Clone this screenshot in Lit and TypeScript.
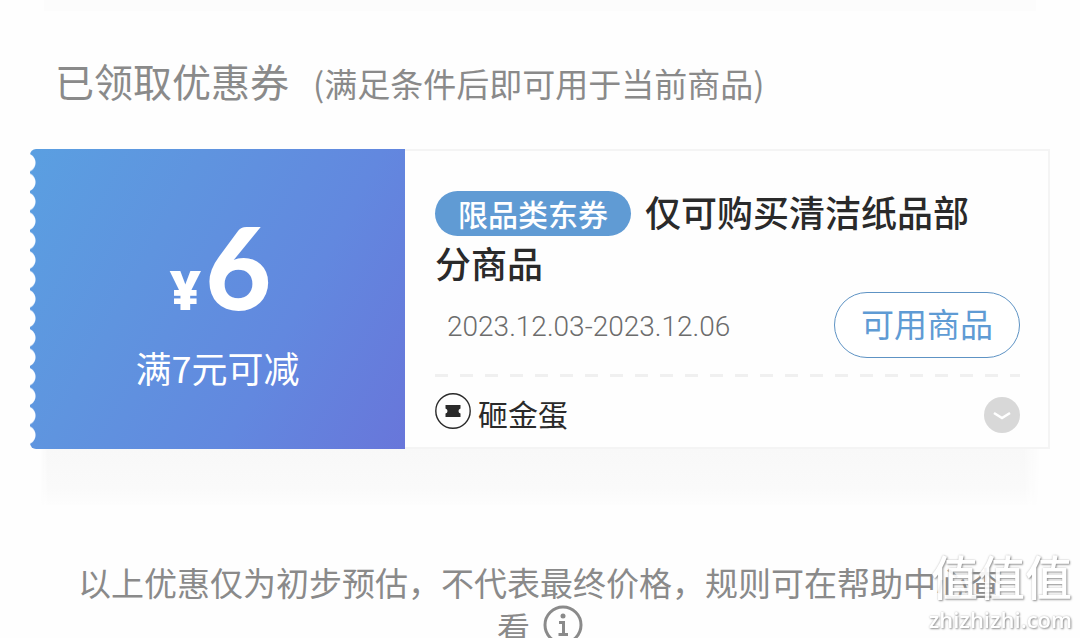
import { LitElement, html, css } from "lit";
import { customElement, property } from "lit/decorators.js";

@customElement("coupon-card")
class CouponCard extends LitElement {
  @property() amount = "";
  @property() condition = "";
  @property() tag = "";
  @property() name = "";
  @property() period = "";
  @property() source = "";

  static styles = css`
    :host {
      display: block;
      margin: 0 30px;
    }
    .card {
      display: flex;
      min-height: 300px;
    }
    .value {
      flex: 0 0 375px;
      display: flex;
      color: #fff;
      background: linear-gradient(118deg, #5a9fe1 0%, #5f94df 33%, #6288df 66%, #6876da 100%);
      border-radius: 6px 0 0 6px;
    }
    .tear {
      width: 6px;
      margin: 4px 0;
      background: radial-gradient(circle at -4px 50%, #fff 9px, transparent 10px) 0 0 / 6px 20px;
      background-repeat: no-repeat round;
    }
    .sum {
      flex: 1;
      display: flex;
      flex-direction: column;
      align-items: center;
      padding: 67px 6px 0 0;
    }
    .amount {
      padding-left: 6px;
      font-family: Lato, sans-serif;
      font-weight: 900;
      line-height: 100px;
      display: flex;
      align-items: baseline;
      gap: 4px;
    }
    .yen {
      font-family: "Open Sans", sans-serif;
      font-weight: 800;
      font-size: 54px;
    }
    .number {
      font-size: 114px;
    }
    .condition {
      font-size: 36px;
      line-height: 44px;
      margin-top: 6px;
    }
    .detail {
      flex: 1;
      min-width: 0;
      box-sizing: border-box;
      border: solid #f4f4f4;
      border-width: 2px 2px 2px 0;
      padding: 35px 28px 0 30px;
    }
    .name {
      margin: 0;
      padding-right: 24px;
      font-size: 36px;
      font-weight: 500;
      line-height: 51px;
      color: #2a2a2a;
    }
    .tag {
      display: inline-block;
      vertical-align: top;
      margin: 5px 14px 0 0;
      padding: 0 23px;
      border-radius: 23px;
      background: #609bd4;
      color: #fff;
      font-size: 30px;
      line-height: 45px;
    }
    .row {
      display: flex;
      justify-content: space-between;
      align-items: center;
    }
    .when {
      margin-top: 4px;
    }
    .period {
      padding: 2px 0 0 12px;
      font-family: Roboto, sans-serif;
      font-weight: 300;
      font-size: 28px;
      color: #6c6c6c;
    }
    .goods {
      box-sizing: border-box;
      width: 186px;
      height: 66px;
      padding: 0 0 4px;
      border: 1px solid #5e93c4;
      border-radius: 33px;
      background: #fff;
      color: #5f9bd4;
      font: inherit;
      font-size: 33px;
    }
    .rule {
      height: 3px;
      margin: 16px 0;
      background: repeating-linear-gradient(90deg, #f0f0f0 0 13px, transparent 13px 25px);
    }
    .source {
      display: flex;
      align-items: flex-start;
      gap: 7px;
      font-size: 30px;
      line-height: 40px;
      color: #2a2a2a;
    }
    .more {
      align-self: flex-end;
      width: 36px;
      height: 36px;
      padding: 0;
      border: 0;
      border-radius: 50%;
      background: #d8d8d8;
    }
    svg {
      display: block;
    }
    .shade {
      height: 56px;
      margin: 0 10px;
      background: linear-gradient(#f8f8f8, #fafafa 70%, #fdfdfd);
      mask-image: linear-gradient(90deg, transparent, #000 8px calc(100% - 16px), transparent);
    }
  `;

  render() {
    return html`
      <article class="card">
        <div class="value">
          <div class="tear"></div>
          <div class="sum">
            <div class="amount"><span class="yen">¥</span><span class="number">${this.amount}</span></div>
            <div class="condition">${this.condition}</div>
          </div>
        </div>
        <div class="detail">
          <h2 class="name"><span class="tag">${this.tag}</span>${this.name}</h2>
          <div class="row when">
            <span class="period">${this.period}</span>
            <button class="goods" type="button">可用商品</button>
          </div>
          <div class="rule"></div>
          <div class="row">
            <span class="source">
              <svg width="36" height="36" viewBox="0 0 36 36" aria-hidden="true">
                <circle cx="18" cy="18" r="17.2" fill="none" stroke="#2a2a2a" stroke-width="1.4" />
                <path d="M10.500 12H25.500V15.500Q23.500 16 23.500 18T25.500 20.500V24H10.500V20.500Q12.500 20 12.500 18T10.500 15.500Z" fill="#2a2a2a" />
              </svg>
              ${this.source}
            </span>
            <button class="more" type="button" aria-label="展开">
              <svg width="36" height="36" viewBox="0 0 36 36">
                <path d="M10 16L18 21L26 16" fill="none" stroke="#fff" stroke-width="2.6" />
              </svg>
            </button>
          </div>
        </div>
      </article>
      <div class="shade"></div>
    `;
  }
}

@customElement("app-root")
class AppRoot extends LitElement {
  static styles = css`
    :host {
      display: block;
      height: 100vh;
      overflow-y: auto;
      scrollbar-width: none;
      background: #fefefe;
      font-family: "Noto Sans CJK SC", sans-serif;
      color: #8a8a8a;
    }
    .previous {
      height: 11px;
      margin: 0 44px;
      background: #fcfcfc;
    }
    .heading {
      display: flex;
      align-items: baseline;
      gap: 24px;
      padding: 39px 55px 36px;
      line-height: 60px;
    }
    .title {
      margin: 0;
      font-size: 39px;
      font-weight: 400;
    }
    .hint {
      font-size: 33px;
    }
    .note {
      margin: 0;
      padding: 55px 72px 20px;
      font-size: 33px;
      line-height: 45px;
      text-align: center;
    }
    .info {
      display: inline-block;
      vertical-align: top;
      margin-left: 13px;
      padding: 0;
      border: 0;
      background: none;
      color: inherit;
    }
    .info svg {
      display: block;
    }
    .mark {
      position: fixed;
      right: 8px;
      bottom: 5px;
      display: flex;
      flex-direction: column;
      align-items: flex-end;
      color: #fff;
      text-shadow: 1px 1px 2px #888, 0 0 2px #bbb;
      opacity: 0.9;
      pointer-events: none;
    }
    .mark-name {
      font-size: 47px;
      font-weight: 500;
      line-height: 60px;
    }
    .mark-site {
      font-family: "Open Sans", sans-serif;
      font-size: 22px;
      font-weight: 600;
      line-height: 28px;
    }
  `;

  render() {
    return html`
      <div class="previous"></div>
      <header class="heading">
        <h1 class="title">已领取优惠券</h1>
        <span class="hint">(满足条件后即可用于当前商品)</span>
      </header>
      <coupon-card
        amount="6"
        condition="满7元可减"
        tag="限品类东券"
        name="仅可购买清洁纸品部分商品"
        period="2023.12.03-2023.12.06"
        source="砸金蛋"
      ></coupon-card>
      <p class="note">以上优惠仅为初步预估，不代表最终价格，规则可在帮助中心查看<button class="info" type="button" aria-label="说明">
          <svg width="40" height="40" viewBox="0 0 40 40">
            <circle cx="20" cy="20" r="18" fill="none" stroke="currentColor" stroke-width="3" />
            <circle cx="20" cy="11" r="2.500" fill="currentColor" />
            <path d="M16 17.500H20.500V29M15.500 29.500H25" fill="none" stroke="currentColor" stroke-width="3" />
          </svg>
        </button>
      </p>
      <div class="mark">
        <span class="mark-name">值值值</span>
        <span class="mark-site">zhizhizhi.com</span>
      </div>
    `;
  }
}
